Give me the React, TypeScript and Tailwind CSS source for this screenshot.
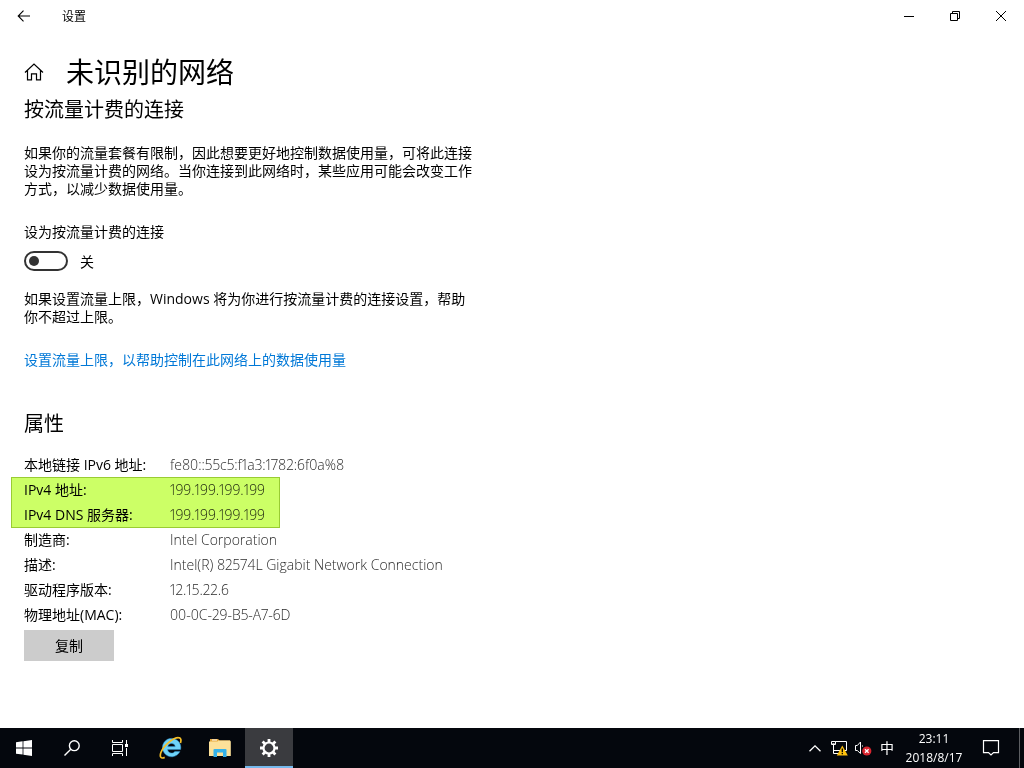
import { useState } from "react"
import type { ReactNode } from "react"

const properties = [
  { label: "本地链接 IPv6 地址:", value: "fe80::55c5:f1a3:1782:6f0a%8" },
  { label: "IPv4 地址:", value: "199.199.199.199", marked: true },
  { label: "IPv4 DNS 服务器:", value: "199.199.199.199" },
  { label: "制造商:", value: "Intel Corporation" },
  { label: "描述:", value: "Intel(R) 82574L Gigabit Network Connection" },
  { label: "驱动程序版本:", value: "12.15.22.6" },
  { label: "物理地址(MAC):", value: "00-0C-29-B5-A7-6D" },
]

function TitleBar() {
  return (
    <header className="flex h-8 items-center">
      <button aria-label="返回" className="flex h-8 w-12 items-center justify-center">
        <svg width="14" height="12" viewBox="0 0 14 12" fill="none" stroke="#000" strokeWidth="1.1">
          <path d="M13 6H1.2M6.5 .7L1.2 6l5.3 5.3" />
        </svg>
      </button>
      <span className="ml-3.5 pt-0.5 text-xs">设置</span>
      <div className="ml-auto flex">
        <button aria-label="最小化" className="flex h-8 w-[46px] items-center justify-center">
          <svg width="10" height="10" viewBox="0 0 10 10" stroke="#000">
            <path d="M0 5.5h10" />
          </svg>
        </button>
        <button aria-label="还原" className="flex h-8 w-[46px] items-center justify-center">
          <svg width="10" height="10" viewBox="0 0 10 10" fill="none" stroke="#000">
            <path d="M.5 2.5h7v7h-7zM2.5 2.5v-2h7v7h-2" />
          </svg>
        </button>
        <button aria-label="关闭" className="flex h-8 w-[46px] items-center justify-center">
          <svg width="10" height="10" viewBox="0 0 10 10" stroke="#000">
            <path d="M0 0l10 10M10 0L0 10" />
          </svg>
        </button>
      </div>
    </header>
  )
}

function TaskButton({ label, active, children }: { label: string; active?: boolean; children: ReactNode }) {
  return (
    <button
      aria-label={label}
      className={
        active
          ? "flex h-10 w-12 items-center justify-center border-b-2 border-[#76b9ed] bg-[#3a3b3f] pt-0.5"
          : "flex h-10 w-12 items-center justify-center"
      }
    >
      {children}
    </button>
  )
}

function Taskbar() {
  return (
    <footer className="flex h-10 items-center bg-[#04070d] text-white">
      <TaskButton label="开始">
        <svg width="16" height="16" viewBox="0 0 16 16" fill="#fff">
          <path d="M0 2.2L6.6 1.3v6.2H0zM7.4 1.2L16 0v7.5H7.4zM0 8.4h6.6v6.2L0 13.7zM7.4 8.4H16V16l-8.6-1.2z" />
        </svg>
      </TaskButton>
      <TaskButton label="搜索">
        <svg width="16" height="16" viewBox="0 0 16 16" fill="none" stroke="#fff" strokeWidth="1.4">
          <circle cx="10.3" cy="5.7" r="4.9" />
          <path d="M6.8 9.2L.5 15.5" />
        </svg>
      </TaskButton>
      <TaskButton label="任务视图">
        <svg width="16" height="16" viewBox="0 0 16 16" fill="none" stroke="#fff">
          <path d="M.5 4.5h10v7H.5zM.5 0v2.5h10V0M.5 16v-2.5h10V16M14.5 0v4M14.5 8v8" />
          <path d="M13 4h3v3h-3z" fill="#fff" stroke="none" />
        </svg>
      </TaskButton>
      <div className="ml-[3px] flex gap-px">
        <TaskButton label="Internet Explorer">
          <svg width="24" height="24" viewBox="0 0 24 24" fill="none">
            <path
              d="M20.9 15.6A9.2 9.2 0 1 1 21.6 13.6H8.6c.3 2.3 1.8 3.5 4 3.5 1.4 0 2.4-.5 3.1-1.5zM8.8 10.6h7.4c-.3-2-1.6-3.1-3.6-3.1s-3.4 1.1-3.8 3.1z"
              fill="#6fd3f8"
              stroke="#2a8fd0"
              strokeWidth=".5"
              fillRule="evenodd"
            />
            <path
              d="M21.5 7c1-3.6.2-5.3-2-5.3C14.4 1.5 4.6 9.5 2 16.3c-1.6 4.3-.3 6.9 3.7 5.1"
              stroke="#f6bf27"
              strokeWidth="1.7"
            />
          </svg>
        </TaskButton>
        <TaskButton label="文件资源管理器">
          <svg width="22" height="20" viewBox="0 0 22 20">
            <path d="M1 1h8l1.5 1.5H21v4H1z" fill="#e6a83c" />
            <path d="M3 1.5h5v1H3z" fill="#fff" />
            <path d="M0 3.5h8.5l1-1H21l.8 1V18H0z" fill="#fde199" />
            <path d="M4.5 19v-7.5l1-.5h11l1 .5V19H14v-4.5H8V19z" fill="#35b2ea" />
          </svg>
        </TaskButton>
        <TaskButton label="设置" active>
          <svg width="18" height="18" viewBox="0 0 18 18" fill="none" stroke="#fff">
            <circle cx="9" cy="9" r="5.5" strokeWidth="2.2" />
            <path
              d="M9 0v3.5M9 14.5V18M0 9h3.5M14.5 9H18M2.6 2.6l2.5 2.5M12.9 12.9l2.5 2.5M2.6 15.4l2.5-2.5M12.9 5.1l2.5-2.5"
              strokeWidth="2.8"
            />
          </svg>
        </TaskButton>
      </div>

      <div className="ml-auto flex h-10 items-center">
        <button aria-label="显示隐藏的图标" className="flex h-10 w-6 items-center justify-center">
          <svg width="12" height="7" viewBox="0 0 12 7" fill="none" stroke="#fff" strokeWidth="1.3">
            <path d="M.5 6.3L6 .9l5.5 5.4" />
          </svg>
        </button>
        <button aria-label="网络" className="flex h-10 w-6 items-center justify-center">
          <svg width="18" height="16" viewBox="0 0 18 16" fill="none" stroke="#fff">
            <path d="M5 1.5h11.5v9H3.5V5M6 13.5h4M3.5 10v3.5h3" />
            <path d="M1.5 1.5h4v3h-4z" fill="#04070d" />
            <path d="M2.5 3l1 1 1-1" />
            <path d="M12.3 5.5L17.8 15.5H6.8z" fill="#ffc20e" stroke="none" />
            <path d="M12.3 8.5v3.7M12.3 13v1.3" stroke="#000" strokeWidth="1.3" />
          </svg>
        </button>
        <button aria-label="音量" className="flex h-10 w-6 items-center justify-center">
          <svg width="18" height="16" viewBox="0 0 18 16" fill="none" stroke="#fff">
            <path d="M1.5 5.5h1.8L6.5 2v11.5L3.3 10.5H1.5z" />
            <path d="M8.5 5.5v1" />
            <circle cx="12.8" cy="11" r="4.6" fill="#d9252f" stroke="none" />
            <path d="M11 9.2l3.6 3.6M14.6 9.2l-3.6 3.6" strokeWidth="1.3" />
          </svg>
        </button>
        <button aria-label="输入法" className="h-10 w-6 text-sm">
          中
        </button>
        <button className="w-[70px] text-center text-xs leading-[19px]">
          <span className="block">23:11</span>
          <span className="block">2018/8/17</span>
        </button>
        <button aria-label="通知" className="flex h-10 w-11 items-center justify-center">
          <svg width="18" height="16" viewBox="0 0 18 16" fill="none" stroke="#fff" strokeWidth="1.2">
            <path d="M1.5.6h15v12h-5L9 15l-2.5-2.4h-5z" />
          </svg>
        </button>
        <button aria-label="显示桌面" className="ml-1.5 h-10 w-[5px] border-l border-[#5c5e62]" />
      </div>
    </footer>
  )
}

export default function App() {
  const [metered, setMetered] = useState(false)

  return (
    <div className="flex min-h-screen flex-col bg-white font-['Open_Sans','Noto_Sans_CJK_SC',sans-serif] text-black">
      <TitleBar />

      <main className="flex-1 px-6 pt-5">
        <div className="flex items-center">
          <svg width="20" height="18" viewBox="0 0 20 18" fill="none" stroke="#000" strokeWidth="1.2">
            <path d="M1 9.5L10 1l9 8.5M3.5 7.5v9.4h4v-6h5v6h4V7.5" />
          </svg>
          <h1 className="ml-[22px] text-[28px] leading-10">未识别的网络</h1>
        </div>

        <section className="max-w-[450px] text-sm leading-[18px]">
          <h2 className="text-xl leading-9">按流量计费的连接</h2>
          <p className="mt-4">
            如果你的流量套餐有限制，因此想要更好地控制数据使用量，可将此连接设为按流量计费的网络。当你连接到此网络时，某些应用可能会改变工作方式，以减少数据使用量。
          </p>
          <label htmlFor="metered" className="mt-[25px] block">
            设为按流量计费的连接
          </label>
          <div className="mt-2.5 flex items-center gap-3">
            <input
              id="metered"
              type="checkbox"
              role="switch"
              checked={metered}
              onChange={(e) => setMetered(e.target.checked)}
              className="flex h-5 w-11 appearance-none items-center rounded-full border-2 border-[#333] px-[3px] before:size-2.5 before:rounded-full before:bg-[#333] checked:justify-end"
            />
            <span className="pt-0.5">{metered ? "开" : "关"}</span>
          </div>
          <p className="mt-[19px]">如果设置流量上限，Windows 将为你进行按流量计费的连接设置，帮助你不超过上限。</p>
          <a href="#limit" className="mt-[25px] block text-[#0078d7]">
            设置流量上限，以帮助控制在此网络上的数据使用量
          </a>
        </section>

        <section className="text-sm">
          <h2 className="mt-[37px] text-xl leading-9">属性</h2>
          <table className="mt-2.5">
            <tbody>
              {properties.map((item) => (
                <tr key={item.label} className="h-[25px] leading-[25px]">
                  <th scope="row" className="relative w-[146px] p-0 text-left font-normal whitespace-nowrap">
                    {item.label}
                    {item.marked && (
                      <span className="absolute top-0 -left-[13px] h-[51px] w-[269px] border border-[#99cc33] bg-[#ccff66] mix-blend-multiply" />
                    )}
                  </th>
                  <td className="p-0 font-light whitespace-nowrap text-[#2a2a2a] proportional-nums">{item.value}</td>
                </tr>
              ))}
            </tbody>
          </table>
          <button className="mt-[3px] h-[31px] w-[90px] bg-[#ccc]">复制</button>
        </section>
      </main>

      <Taskbar />
    </div>
  )
}
